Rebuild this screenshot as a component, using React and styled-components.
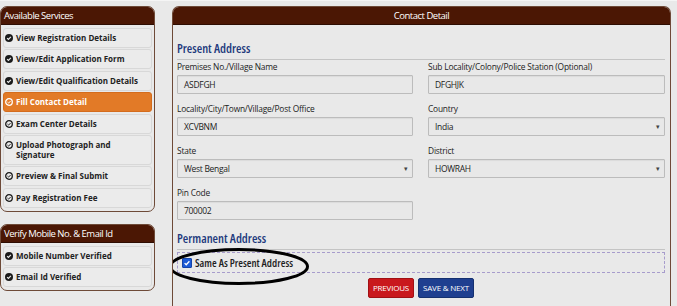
import React from "react";
import styled, { createGlobalStyle } from "styled-components";

const GlobalStyle = createGlobalStyle`
  html, body {
    margin: 0;
    padding: 0;
    background: #e9e9e9;
    font-family: "Open Sans", "Liberation Sans", sans-serif;
  }
`;

const services = [
  { label: "View Registration Details", done: true },
  { label: "View/Edit Application Form", done: true },
  { label: "View/Edit Qualification Details", done: true },
  { label: "Fill Contact Detail", active: true },
  { label: "Exam Center Details" },
  { label: "Upload Photograph and Signature" },
  { label: "Preview & Final Submit" },
  { label: "Pay Registration Fee" },
];

const verify = [
  { label: "Mobile Number Verified", done: true },
  { label: "Email Id Verified", done: true },
];

const StatusIcon = ({ done, light }) => {
  const c = light ? "#ffffff" : "#1a1a1a";
  if (done) {
    return (
      <svg width="8" height="8" viewBox="0 0 16 16">
        <circle cx="8" cy="8" r="8" fill={c} />
        <path d="M4.2 8.3l2.6 2.5 5-5.2" stroke="#eaeaea" strokeWidth="2.4" fill="none" />
      </svg>
    );
  }
  return (
    <svg width="8" height="8" viewBox="0 0 16 16">
      <circle cx="8" cy="8" r="6.6" stroke={c} strokeWidth="2.6" fill="none" />
      <path d="M5 8.2l2.1 2 4-4.1" stroke={c} strokeWidth="2" fill="none" />
    </svg>
  );
};

export default function App() {
  return (
    <>
      <GlobalStyle />
      <Page>
        <Sidebar>
          <Panel>
            <PanelHeader>Available Services</PanelHeader>
            <ItemList>
              {services.map((s) => (
                <Item key={s.label} $active={s.active}>
                  <IconSlot>
                    <StatusIcon done={s.done} light={s.active} />
                  </IconSlot>
                  <span>{s.label}</span>
                </Item>
              ))}
            </ItemList>
          </Panel>
          <Panel>
            <PanelHeader>Verify Mobile No. &amp; Email Id</PanelHeader>
            <ItemList>
              {verify.map((s) => (
                <Item key={s.label}>
                  <IconSlot>
                    <StatusIcon done />
                  </IconSlot>
                  <span>{s.label}</span>
                </Item>
              ))}
            </ItemList>
          </Panel>
        </Sidebar>

        <Main>
          <MainHeader>Contact Detail</MainHeader>
          <MainBody>
            <SectionTitle>Present Address</SectionTitle>
            <FormGrid>
              <Field>
                <Label>Premises No./Village Name</Label>
                <Input>ASDFGH</Input>
              </Field>
              <Field>
                <Label>Sub Locality/Colony/Police Station (Optional)</Label>
                <Input>DFGHJK</Input>
              </Field>
              <Field>
                <Label>Locality/City/Town/Village/Post Office</Label>
                <Input>XCVBNM</Input>
              </Field>
              <Field>
                <Label>Country</Label>
                <Input $select>India</Input>
              </Field>
              <Field>
                <Label>State</Label>
                <Input $select>West Bengal</Input>
              </Field>
              <Field>
                <Label>District</Label>
                <Input $select>HOWRAH</Input>
              </Field>
              <Field>
                <Label>Pin Code</Label>
                <Input>700002</Input>
              </Field>
            </FormGrid>

            <SectionTitle $permanent>Permanent Address</SectionTitle>
            <SameBox>
              <CheckLabel>
                <CheckBox>
                  <svg width="8" height="8" viewBox="0 0 10 10">
                    <path d="M2 5.2l2 2 4-4.4" stroke="#fff" strokeWidth="1.6" fill="none" />
                  </svg>
                </CheckBox>
                Same As Present Address
              </CheckLabel>
              <Circle width="142" height="39" viewBox="0 0 142 39">
                <ellipse cx="71" cy="19.5" rx="68.5" ry="17" fill="none" stroke="#000" strokeWidth="3" />
              </Circle>
            </SameBox>

            <Actions>
              <Button $tone="red">PREVIOUS</Button>
              <Button $tone="blue">SAVE &amp; NEXT</Button>
            </Actions>
          </MainBody>
        </Main>
      </Page>
    </>
  );
}

const Page = styled.div`
  display: flex;
  align-items: flex-start;
  gap: 17px;
  padding: 5px 6px 0 0;
  border-top: 1px solid #f5f5f5;
  height: 306px;
  box-sizing: border-box;
  overflow: hidden;
`;

const Sidebar = styled.div`
  width: 155px;
  flex-shrink: 0;
  display: flex;
  flex-direction: column;
  gap: 12px;
`;

const Panel = styled.div`
  border: 1px solid #6e4a38;
  border-radius: 7px;
  background: #e9e9e9;
  overflow: hidden;
`;

const PanelHeader = styled.div`
  background: #4b1704;
  color: #fff;
  font-size: 9.5px;
  letter-spacing: -0.5px;
  height: 17px;
  line-height: 17px;
  padding: 0 3px;
  border-bottom: 1px solid #2e0d02;
`;

const ItemList = styled.div`
  display: flex;
  flex-direction: column;
  gap: 1.4px;
  padding: 3px 2px 3px 2px;
`;

const Item = styled.div`
  display: flex;
  align-items: flex-start;
  gap: 3px;
  padding: 4px 3px 4px 1px;
  min-height: 10px;
  line-height: 10px;
  font-size: 8px;
  font-weight: 700;
  font-stretch: 92%;
  color: ${(p) => (p.$active ? "#fff" : "#222")};
  background: ${(p) => (p.$active ? "#e27a27" : "#ebebeb")};
  border: 1px solid ${(p) => (p.$active ? "#d46c1d" : "#d8d8d8")};
  border-radius: 3px;
`;

const IconSlot = styled.span`
  display: inline-flex;
  align-items: center;
  height: 10px;
  flex-shrink: 0;
`;

const Main = styled.div`
  flex: 1;
  align-self: stretch;
  display: flex;
  flex-direction: column;
  border: 1px solid #6e4a38;
  border-bottom: none;
  border-radius: 7px 7px 0 0;
  background: #e9e9e9;
  overflow: hidden;
  margin-bottom: -20px;
`;

const MainHeader = styled.div`
  background: #4b1704;
  color: #fff;
  font-size: 9.5px;
  letter-spacing: -0.5px;
  height: 17px;
  line-height: 17px;
  text-align: center;
  border-bottom: 1px solid #2e0d02;
`;

const MainBody = styled.div`
  padding: 16px 5px 0 4px;
  display: flex;
  flex-direction: column;
`;

const SectionTitle = styled.div`
  color: #22397c;
  font-size: 12.5px;
  font-weight: 600;
  font-stretch: 82%;
  line-height: 16px;
  padding-bottom: 2px;
  border-bottom: 1px solid #c4c4c4;
  margin-top: ${(p) => (p.$permanent ? "11px" : "0")};
`;

const FormGrid = styled.div`
  display: grid;
  grid-template-columns: 236px 237px;
  column-gap: 15px;
  row-gap: 10px;
  padding-top: 2px;
`;

const Field = styled.div`
  display: flex;
  flex-direction: column;
`;

const Label = styled.div`
  font-size: 8.4px;
  letter-spacing: -0.2px;
  color: #222;
  line-height: 10px;
  margin-bottom: 3px;
`;

const Input = styled.div`
  position: relative;
  height: 17px;
  line-height: 17px;
  padding: 0 6px;
  font-size: 8.5px;
  letter-spacing: -0.3px;
  color: #222;
  background: #e8e8e8;
  border: 1px solid #bcbcbc;
  border-radius: 1px;
  box-shadow: inset 0 1px 1px rgba(0, 0, 0, 0.06);
  &::after {
    content: ${(p) => (p.$select ? '"▾"' : "none")};
    position: absolute;
    right: 4px;
    top: 0;
    font-size: 7px;
    color: #444;
  }
`;

const SameBox = styled.div`
  position: relative;
  margin-top: 2px;
  height: 19px;
  border: 1px dashed #a79ccc;
  display: flex;
  align-items: center;
  padding-left: 4px;
`;

const CheckLabel = styled.label`
  display: flex;
  align-items: center;
  gap: 3px;
  font-size: 10.8px;
  font-weight: 600;
  font-stretch: 85%;
  color: #1e1e1e;
`;

const CheckBox = styled.span`
  width: 8px;
  height: 8px;
  background: #1c5ad6;
  border: 1px solid #1544a8;
  border-radius: 1px;
  display: inline-flex;
  align-items: center;
  justify-content: center;
`;

const Circle = styled.svg`
  position: absolute;
  left: -10px;
  top: -6px;
  pointer-events: none;
`;

const Actions = styled.div`
  display: flex;
  justify-content: center;
  gap: 4px;
  margin-top: 5px;
`;

const Button = styled.div`
  height: 18px;
  line-height: 18px;
  padding: 0 4px;
  font-size: 8px;
  letter-spacing: -0.2px;
  color: #fff;
  border-radius: 2px;
  background: ${(p) => (p.$tone === "red" ? "#c9181d" : "#1f3f90")};
  border: 1px solid ${(p) => (p.$tone === "red" ? "#a01014" : "#15306f")};
`;
